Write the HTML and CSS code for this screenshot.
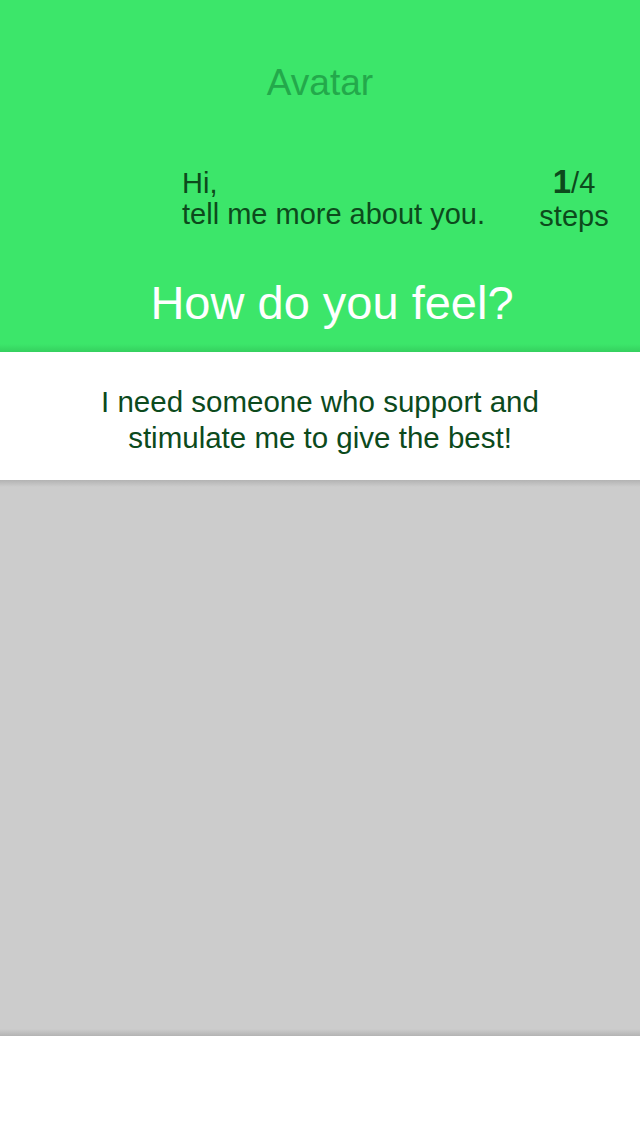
FILE: index.html
```html
<!DOCTYPE html>
<html lang="en">
<head>
<meta charset="utf-8">
<title>How do you feel?</title>
<link rel="stylesheet" href="styles.css">
</head>
<body>
<div class="screen">
  <header class="hero">
    <div class="avatar">Avatar</div>
    <div class="intro">
      <p class="greeting">Hi,<br>tell me more about you.</p>
      <div class="steps">
        <div class="steps-count"><b>1</b>/4</div>
        <div class="steps-label">steps</div>
      </div>
    </div>
    <h1 class="question">How do you feel?</h1>
  </header>
  <section class="answer">
    <p>I need someone who support and<br>stimulate me to give the best!</p>
  </section>
  <section class="canvas"></section>
  <footer class="bottom"></footer>
</div>
</body>
</html>
```
FILE: styles.css
```css
* { box-sizing: border-box; }
html, body {
  margin: 0;
  padding: 0;
  background: #ffffff;
}
body {
  font-family: "Liberation Sans", Arial, sans-serif;
  color: #0c4a1c;
}
.screen {
  width: 640px;
  height: 1136px;
  display: flex;
  flex-direction: column;
  overflow: hidden;
}
.hero {
  height: 352px;
  padding-top: 62px;
  background: linear-gradient(to bottom, #3ce66a 0, #3ce66a calc(100% - 8px), #35d05f 100%);
  display: flex;
  flex-direction: column;
}
.avatar {
  font-size: 37px;
  line-height: 42px;
  text-align: center;
  color: #23a94b;
}
.intro {
  margin-top: 64px;
  display: flex;
  align-items: flex-start;
  padding: 0 26px 0 182px;
}
.greeting {
  flex: 1;
  margin: 0;
  font-size: 29px;
  line-height: 31px;
  color: #0c4a1c;
}
.steps {
  width: 80px;
  margin-top: -3px;
  text-align: center;
  font-size: 29px;
  line-height: 33px;
  color: #0c4a1c;
}
.steps-count b {
  font-weight: bold;
  font-size: 33px;
}
.question {
  margin: 42px 0 0 0;
  padding-left: 24px;
  font-size: 47px;
  line-height: 56px;
  font-weight: normal;
  text-align: center;
  color: #ffffff;
}
.answer {
  height: 128px;
  background: #ffffff;
  padding-top: 32px;
}
.answer p {
  margin: 0;
  font-size: 29.5px;
  line-height: 36px;
  text-align: center;
  color: #0c4a1c;
}
.canvas {
  height: 556px;
  background: linear-gradient(to bottom, #b3b3b3 0, #cccccc 7px, #cccccc calc(100% - 7px), #b3b3b3 100%);
}
.bottom {
  flex: 1;
  background: #ffffff;
}
```
